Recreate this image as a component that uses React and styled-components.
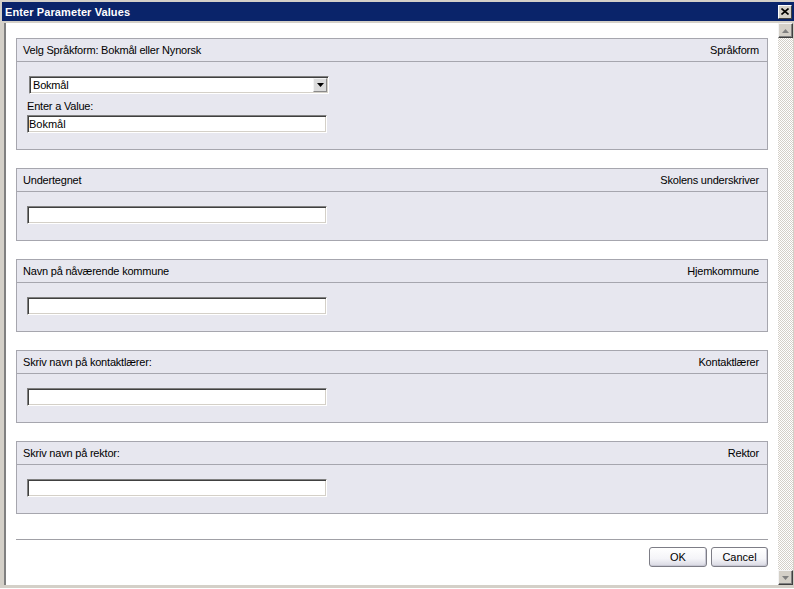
import React from "react";
import styled, { createGlobalStyle } from "styled-components";

const GlobalStyle = createGlobalStyle`
  html, body {
    margin: 0;
    padding: 0;
    background: #d4d0c8;
  }
  body {
    font-family: "Liberation Sans", Arial, sans-serif;
    font-size: 11px;
    letter-spacing: -0.2px;
    color: #000;
  }
`;

const Window = styled.div`
  width: 794px;
  height: 589px;
  display: flex;
  flex-direction: column;
  background: #d4d0c8;
  box-sizing: border-box;
  padding-top: 2px;
  padding-bottom: 3px;
  border-bottom: 1px solid #ffffff;
  overflow: hidden;
`;

const TitleBar = styled.div`
  height: 19px;
  margin: 0 0 2px 2px;
  display: flex;
  align-items: center;
  justify-content: space-between;
  background: #0a246a;
  padding: 0 2px 0 3px;
`;

const Title = styled.span`
  color: #fff;
  font-weight: bold;
  font-size: 11px;
  letter-spacing: 0.1px;
`;

const CloseButton = styled.button`
  width: 14px;
  height: 14px;
  padding: 0;
  background: #d4d0c8;
  border: 1px solid;
  border-color: #fff #404040 #404040 #fff;
  display: flex;
  align-items: center;
  justify-content: center;
`;

const Frame = styled.div`
  flex: 1;
  display: flex;
  min-height: 0;
  margin-left: 4px;
  border-left: 2px solid #808080;
`;

const Content = styled.div`
  flex: 1;
  background: #fff;
  padding: 15px 10px 0 10px;
  display: flex;
  flex-direction: column;
  gap: 18px;
`;

const Panel = styled.section`
  border: 1px solid #a6a6ae;
  background: #e7e7ef;
  display: flex;
  flex-direction: column;
`;

const PanelHeader = styled.div`
  height: 22px;
  display: flex;
  align-items: center;
  justify-content: space-between;
  padding: 0 8px 0 6px;
  border-bottom: 1px solid #a6a6ae;
`;

const PanelBody = styled.div`
  padding: 14px 0 16px 10px;
  display: flex;
  flex-direction: column;
  align-items: flex-start;
`;

const FieldLabel = styled.div`
  margin: 6px 0 2px 0;
  line-height: 13px;
`;

const TextInput = styled.input`
  width: 300px;
  height: 18px;
  box-sizing: border-box;
  margin: 0;
  padding: 0 1px;
  font: inherit;
  font-size: 11px;
  background: #fff;
  border: 1px solid;
  border-color: #808080 #ffffff #ffffff #808080;
  box-shadow: inset 1px 1px 0 #404040, inset -1px -1px 0 #d4d0c8;
  outline: none;
`;

const SelectBox = styled.div`
  width: 300px;
  height: 18px;
  box-sizing: border-box;
  margin-left: 2px;
  display: flex;
  align-items: center;
  background: #fff;
  border: 1px solid;
  border-color: #808080 #ffffff #ffffff #808080;
  box-shadow: inset 1px 1px 0 #404040, inset -1px -1px 0 #d4d0c8;
  padding-left: 3px;
`;

const SelectValue = styled.span`
  flex: 1;
`;

const DropButton = styled.div`
  width: 14px;
  height: 14px;
  margin-right: 1px;
  background: #dcdcdc;
  border: 1px solid;
  border-color: #f4f4f4 #8a8a8a #8a8a8a #f4f4f4;
  box-sizing: border-box;
  display: flex;
  align-items: center;
  justify-content: center;
`;

const Footer = styled.div`
  margin-top: 7px;
  border-top: 1px solid #a0a0a6;
  padding-top: 7px;
  display: flex;
  justify-content: flex-end;
  gap: 4px;
`;

const DialogButton = styled.button`
  width: ${(p) => p.$w}px;
  height: 20px;
  padding: 0;
  font: inherit;
  font-size: 11px;
  color: #000;
  border: 1px solid #7d7d86;
  border-radius: 3px;
  background: linear-gradient(#ffffff, #f4f4f8 60%, #d8d8e2);
  box-shadow: inset -1px -1px 0 #c8c8d4;
`;

const ScrollBar = styled.div`
  width: 15px;
  display: flex;
  flex-direction: column;
  margin-right: 1px;
  background-color: #fff;
  background-image: repeating-conic-gradient(#d4d0c8 0 25%, #ffffff 0 50%);
  background-size: 2px 2px;
`;

const ScrollArrow = styled.div`
  height: 15px;
  box-sizing: border-box;
  background: #d4d0c8;
  border: 1px solid;
  border-color: #f4f4f4 #404040 #404040 #f4f4f4;
  box-shadow: inset -1px -1px 0 #808080;
  display: flex;
  align-items: center;
  justify-content: center;
`;

const Track = styled.div`
  flex: 1;
`;

const Spacer = styled.div`
  flex: 1;
`;

const Arrow = ({ up, color = "#000" }) => (
  <svg width="7" height="4" viewBox="0 0 7 4">
    <path
      d={up ? "M3.5 0 L7 4 L0 4 Z" : "M0 0 L7 0 L3.5 4 Z"}
      fill={color}
    />
  </svg>
);

const params = [
  { label: "Undertegnet", name: "Skolens underskriver" },
  { label: "Navn på nåværende kommune", name: "Hjemkommune" },
  { label: "Skriv navn på kontaktlærer:", name: "Kontaktlærer" },
  { label: "Skriv navn på rektor:", name: "Rektor" },
];

export default function App() {
  return (
    <>
      <GlobalStyle />
      <Window>
        <TitleBar>
          <Title>Enter Parameter Values</Title>
          <CloseButton aria-label="Close">
            <svg width="8" height="7" viewBox="0 0 8 7">
              <path d="M0.5 0.5 L7.5 6.5 M7.5 0.5 L0.5 6.5" stroke="#000" strokeWidth="1.6" />
            </svg>
          </CloseButton>
        </TitleBar>
        <Frame>
          <Content>
            <Panel>
              <PanelHeader>
                <span>Velg Språkform: Bokmål eller Nynorsk</span>
                <span>Språkform</span>
              </PanelHeader>
              <PanelBody>
                <SelectBox>
                  <SelectValue>Bokmål</SelectValue>
                  <DropButton>
                    <Arrow />
                  </DropButton>
                </SelectBox>
                <FieldLabel>Enter a Value:</FieldLabel>
                <TextInput defaultValue="Bokmål" />
              </PanelBody>
            </Panel>
            {params.map((p) => (
              <Panel key={p.name}>
                <PanelHeader>
                  <span>{p.label}</span>
                  <span>{p.name}</span>
                </PanelHeader>
                <PanelBody>
                  <TextInput />
                </PanelBody>
              </Panel>
            ))}
            <Footer>
              <DialogButton $w={58}>OK</DialogButton>
              <DialogButton $w={57}>Cancel</DialogButton>
            </Footer>
            <Spacer />
          </Content>
          <ScrollBar>
            <ScrollArrow>
              <Arrow up color="#808080" />
            </ScrollArrow>
            <Track />
            <ScrollArrow>
              <Arrow color="#808080" />
            </ScrollArrow>
          </ScrollBar>
        </Frame>
      </Window>
    </>
  );
}
